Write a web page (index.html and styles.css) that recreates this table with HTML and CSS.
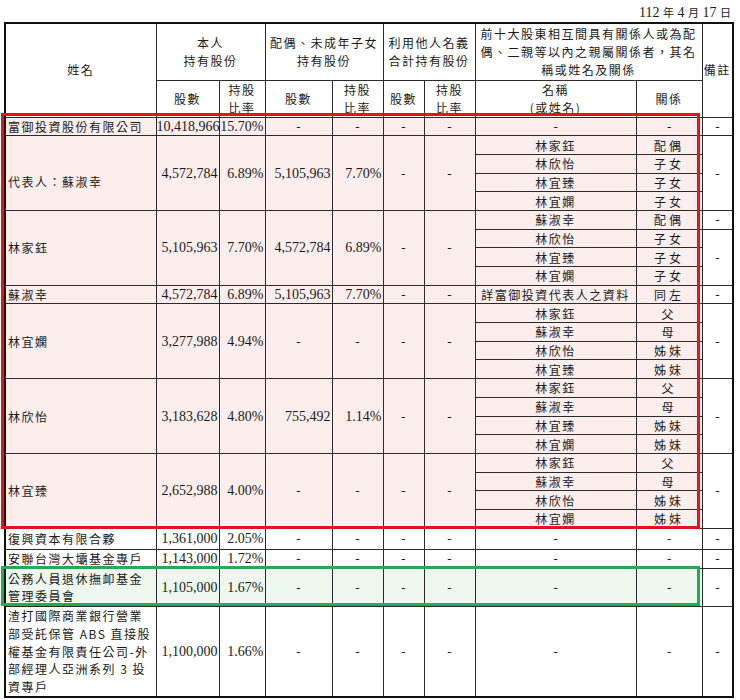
FILE: index.html
```html
<!DOCTYPE html>
<html lang="zh-Hant">
<head>
<meta charset="utf-8">
<link rel="stylesheet" href="styles.css">
</head>
<body>
<div class="page">
  <div class="date">112 <span class="cj">年</span> 4 <span class="cj">月</span> 17 <span class="cj">日</span></div>
  <table class="grid">
    <colgroup>
      <col class="c-name"><col class="c-n1"><col class="c-p1"><col class="c-n2"><col class="c-p2"><col class="c-n3"><col class="c-p3"><col class="c-rel"><col class="c-rt"><col class="c-note">
    </colgroup>
    <thead>
      <tr class="h1">
        <th rowspan="2">姓名</th>
        <th colspan="2">本人<br>持有股份</th>
        <th colspan="2">配偶、未成年子女<br>持有股份</th>
        <th colspan="2">利用他人名義<br>合計持有股份</th>
        <th colspan="2">前十大股東相互間具有關係人或為配<br>偶、二親等以內之親屬關係者，其名<br>稱或姓名及關係</th>
        <th rowspan="2">備註</th>
      </tr>
      <tr class="h2">
        <th>股數</th><th>持股<br>比率</th>
        <th>股數</th><th>持股<br>比率</th>
        <th>股數</th><th>持股<br>比率</th>
        <th>名稱<br>(或姓名)</th><th>關係</th>
      </tr>
    </thead>
    <tbody>
      <tr class="s p">
        <td class="name">富御投資股份有限公司</td>
        <td class="num">10,418,966</td><td class="num">15.70%</td>
        <td class="d">-</td><td class="d">-</td><td class="d">-</td><td class="d">-</td><td class="d">-</td><td class="d">-</td>
        <td class="d w">-</td>
      </tr>
      <tr class="s p">
        <td class="name low" rowspan="4">代表人：蘇淑幸</td>
        <td class="num" rowspan="4">4,572,784</td><td class="num" rowspan="4">6.89%</td>
        <td class="num" rowspan="4">5,105,963</td><td class="num" rowspan="4">7.70%</td>
        <td class="d" rowspan="4">-</td><td class="d" rowspan="4">-</td>
        <td class="c">林家鈺</td><td class="c rel">配偶</td>
        <td class="d w" rowspan="4">-</td>
      </tr>
      <tr class="s p"><td class="c">林欣怡</td><td class="c rel">子女</td></tr>
      <tr class="s p"><td class="c">林宜臻</td><td class="c rel">子女</td></tr>
      <tr class="s p"><td class="c">林宜嫻</td><td class="c rel">子女</td></tr>

      <tr class="s p">
        <td class="name" rowspan="4">林家鈺</td>
        <td class="num" rowspan="4">5,105,963</td><td class="num" rowspan="4">7.70%</td>
        <td class="num" rowspan="4">4,572,784</td><td class="num" rowspan="4">6.89%</td>
        <td class="d" rowspan="4">-</td><td class="d" rowspan="4">-</td>
        <td class="c">蘇淑幸</td><td class="c rel">配偶</td>
        <td class="d w">-</td>
      </tr>
      <tr class="s p"><td class="c">林欣怡</td><td class="c rel">子女</td><td class="d w" rowspan="3">-</td></tr>
      <tr class="s p"><td class="c">林宜臻</td><td class="c rel">子女</td></tr>
      <tr class="s p"><td class="c">林宜嫻</td><td class="c rel">子女</td></tr>

      <tr class="s p">
        <td class="name">蘇淑幸</td>
        <td class="num">4,572,784</td><td class="num">6.89%</td>
        <td class="num">5,105,963</td><td class="num">7.70%</td>
        <td class="d">-</td><td class="d">-</td>
        <td class="c">詳富御投資代表人之資料</td><td class="c rel">同左</td>
        <td class="d w">-</td>
      </tr>

      <tr class="s p">
        <td class="name" rowspan="4">林宜嫻</td>
        <td class="num" rowspan="4">3,277,988</td><td class="num" rowspan="4">4.94%</td>
        <td class="d" rowspan="4">-</td><td class="d" rowspan="4">-</td>
        <td class="d" rowspan="4">-</td><td class="d" rowspan="4">-</td>
        <td class="c">林家鈺</td><td class="c rel">父</td>
        <td class="d w" rowspan="4">-</td>
      </tr>
      <tr class="s p"><td class="c">蘇淑幸</td><td class="c rel">母</td></tr>
      <tr class="s p"><td class="c">林欣怡</td><td class="c rel">姊妹</td></tr>
      <tr class="s p"><td class="c">林宜臻</td><td class="c rel">姊妹</td></tr>

      <tr class="s p">
        <td class="name" rowspan="4">林欣怡</td>
        <td class="num" rowspan="4">3,183,628</td><td class="num" rowspan="4">4.80%</td>
        <td class="num" rowspan="4">755,492</td><td class="num" rowspan="4">1.14%</td>
        <td class="d" rowspan="4">-</td><td class="d" rowspan="4">-</td>
        <td class="c">林家鈺</td><td class="c rel">父</td>
        <td class="d w" rowspan="4">-</td>
      </tr>
      <tr class="s p"><td class="c">蘇淑幸</td><td class="c rel">母</td></tr>
      <tr class="s p"><td class="c">林宜臻</td><td class="c rel">姊妹</td></tr>
      <tr class="s p"><td class="c">林宜嫻</td><td class="c rel">姊妹</td></tr>

      <tr class="s p">
        <td class="name" rowspan="4">林宜臻</td>
        <td class="num" rowspan="4">2,652,988</td><td class="num" rowspan="4">4.00%</td>
        <td class="d" rowspan="4">-</td><td class="d" rowspan="4">-</td>
        <td class="d" rowspan="4">-</td><td class="d" rowspan="4">-</td>
        <td class="c">林家鈺</td><td class="c rel">父</td>
        <td class="d w" rowspan="4">-</td>
      </tr>
      <tr class="s p"><td class="c">蘇淑幸</td><td class="c rel">母</td></tr>
      <tr class="s p"><td class="c">林欣怡</td><td class="c rel">姊妹</td></tr>
      <tr class="s p"><td class="c">林宜嫻</td><td class="c rel">姊妹</td></tr>

      <tr class="r-fx">
        <td class="name">復興資本有限合夥</td>
        <td class="num">1,361,000</td><td class="num">2.05%</td>
        <td class="d">-</td><td class="d">-</td><td class="d">-</td><td class="d">-</td><td class="d">-</td><td class="d">-</td><td class="d">-</td>
      </tr>
      <tr class="r-al">
        <td class="name">安聯台灣大壩基金專戶</td>
        <td class="num">1,143,000</td><td class="num">1.72%</td>
        <td class="d">-</td><td class="d">-</td><td class="d">-</td><td class="d">-</td><td class="d">-</td><td class="d">-</td><td class="d">-</td>
      </tr>
      <tr class="r-gov g">
        <td class="name">公務人員退休撫卹基金<br>管理委員會</td>
        <td class="num">1,105,000</td><td class="num">1.67%</td>
        <td class="d">-</td><td class="d">-</td><td class="d">-</td><td class="d">-</td><td class="d">-</td><td class="d">-</td><td class="d w">-</td>
      </tr>
      <tr class="r-sc">
        <td class="name tall">渣打國際商業銀行營業<br>部受託保管 ABS 直接股<br>權基金有限責任公司-外<br>部經理人亞洲系列 3 投<br>資專戶</td>
        <td class="num">1,100,000</td><td class="num">1.66%</td>
        <td class="d">-</td><td class="d">-</td><td class="d">-</td><td class="d">-</td><td class="d">-</td><td class="d">-</td><td class="d">-</td>
      </tr>
    </tbody>
  </table>
  <div class="mark mark-red"></div>
  <div class="mark mark-green"></div>
</div>
</body>
</html>
```

FILE: styles.css
```css
html, body {
  margin: 0;
  padding: 0;
  background: #ffffff;
}

.page {
  position: relative;
  width: 740px;
  height: 700px;
  padding-left: 4px;
  box-sizing: border-box;
  font-family: "Liberation Serif", "Noto Sans CJK TC", serif;
  color: #1a1a1a;
}

.date {
  height: 22px;
  line-height: 25px;
  text-align: right;
  padding-right: 9px;
  font-size: 14px;
}

.date .cj {
  font-size: 11px;
  font-family: "Noto Sans CJK TC", sans-serif;
}

.grid {
  border-collapse: collapse;
  table-layout: fixed;
  width: 729px;
  border: 2.5px solid #111111;
  font-size: 12px;
  letter-spacing: 1.5px;
}

.c-name { width: 151px; }
.c-n1 { width: 63px; }
.c-p1 { width: 46px; }
.c-n2 { width: 67px; }
.c-p2 { width: 51px; }
.c-n3 { width: 41px; }
.c-p3 { width: 51px; }
.c-rel { width: 161px; }
.c-rt { width: 66px; }
.c-note { width: 31px; }

.grid th,
.grid td {
  border: 1px solid #2b2b2b;
  padding: 0;
  vertical-align: middle;
  overflow: visible;
  white-space: nowrap;
}

.grid th {
  font-weight: normal;
  line-height: 18px;
  text-align: center;
  font-family: "Noto Sans CJK TC", sans-serif;
}

.h1 { height: 57px; }
.h2 { height: 36px; }

.s { height: 18.7px; }
.r-fx { height: 21px; }
.r-al { height: 19px; }
.r-gov { height: 38px; }
.r-sc { height: 91px; }

.grid td {
  line-height: 17px;
}

.p td { background: #fdeeee; }
.g td { background: #eef8ef; }
.grid td.w { background: #ffffff; }

.name {
  text-align: left;
  padding-left: 2px !important;
  font-family: "Noto Sans CJK TC", sans-serif;
}

.name.low { padding-top: 16px !important; }

.name.tall { line-height: 17.6px !important; }

.num {
  text-align: right;
  font-size: 14px;
  letter-spacing: 0;
  padding-right: 1px !important;
}

.d {
  text-align: center;
  letter-spacing: 0;
  font-size: 13px;
}

.c {
  text-align: center;
  font-family: "Noto Sans CJK TC", sans-serif;
}

.c.rel {
  letter-spacing: 3px;
}

.mark {
  position: absolute;
  box-sizing: border-box;
  pointer-events: none;
}

.mark-red {
  left: 1px;
  top: 113px;
  width: 699px;
  height: 416px;
  border: 3px solid #e3141b;
}

.mark-green {
  left: 1px;
  top: 566px;
  width: 699px;
  height: 40px;
  border: 3px solid #1fae50;
}
```
